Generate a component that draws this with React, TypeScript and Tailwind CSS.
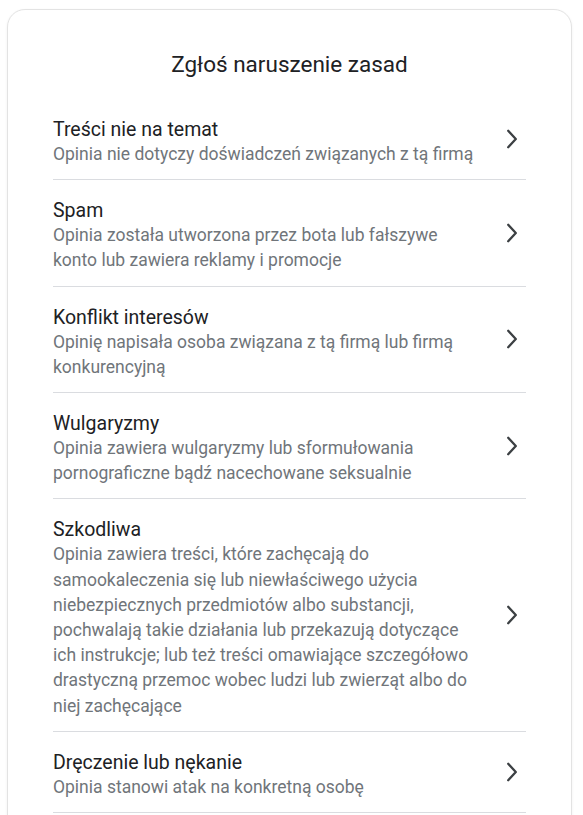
const reasons = [
  {
    title: "Treści nie na temat",
    desc: "Opinia nie dotyczy doświadczeń związanych z tą firmą",
  },
  {
    title: "Spam",
    desc: "Opinia została utworzona przez bota lub fałszywe konto lub zawiera reklamy i promocje",
  },
  {
    title: "Konflikt interesów",
    desc: "Opinię napisała osoba związana z tą firmą lub firmą konkurencyjną",
  },
  {
    title: "Wulgaryzmy",
    desc: "Opinia zawiera wulgaryzmy lub sformułowania pornograficzne bądź nacechowane seksualnie",
  },
  {
    title: "Szkodliwa",
    desc: "Opinia zawiera treści, które zachęcają do samookaleczenia się lub niewłaściwego użycia niebezpiecznych przedmiotów albo substancji, pochwalają takie działania lub przekazują dotyczące ich instrukcje; lub też treści omawiające szczegółowo drastyczną przemoc wobec ludzi lub zwierząt albo do niej zachęcające",
  },
  {
    title: "Dręczenie lub nękanie",
    desc: "Opinia stanowi atak na konkretną osobę",
  },
];

function Chevron() {
  return (
    <svg width="12" height="20" viewBox="0 0 12 20" fill="none">
      <path
        d="M2.2 1.8 L9.8 10 L2.2 18.2"
        stroke="#3c4043"
        strokeWidth="2.3"
        strokeLinecap="round"
        strokeLinejoin="round"
      />
    </svg>
  );
}

export default function App() {
  return (
    <div
      className="min-h-[815px] bg-white pt-[9px] px-[7px] overflow-hidden"
      style={{ fontFamily: "Roboto, 'Noto Sans', sans-serif" }}
    >
      <div className="w-[565px] min-h-[900px] rounded-[18px] border border-[#e3e3e3] bg-white shadow-[0_1px_3px_rgba(0,0,0,0.06)] px-[45px]">
        <h1 className="pt-[39px] pb-[20px] text-center text-[22.5px] leading-[30px] text-[#202124]">
          Zgłoś naruszenie zasad
        </h1>

        {/* Lista powodów */}
        <ul>
          {reasons.map((r) => (
            <li
              key={r.title}
              className="flex items-center border-b border-[#dadce0] pt-[18px] pb-[12px] cursor-pointer"
            >
              <div className="flex-1 min-w-0">
                <div className="text-[19.5px] leading-[25px] text-[#202124]">
                  {r.title}
                </div>
                <div className="text-[17.5px] leading-[25.2px] text-[#70757a]">
                  {r.desc}
                </div>
              </div>
              <div className="ml-6 mr-2 -mt-[6px] shrink-0">
                <Chevron />
              </div>
            </li>
          ))}
        </ul>
      </div>
    </div>
  );
}
